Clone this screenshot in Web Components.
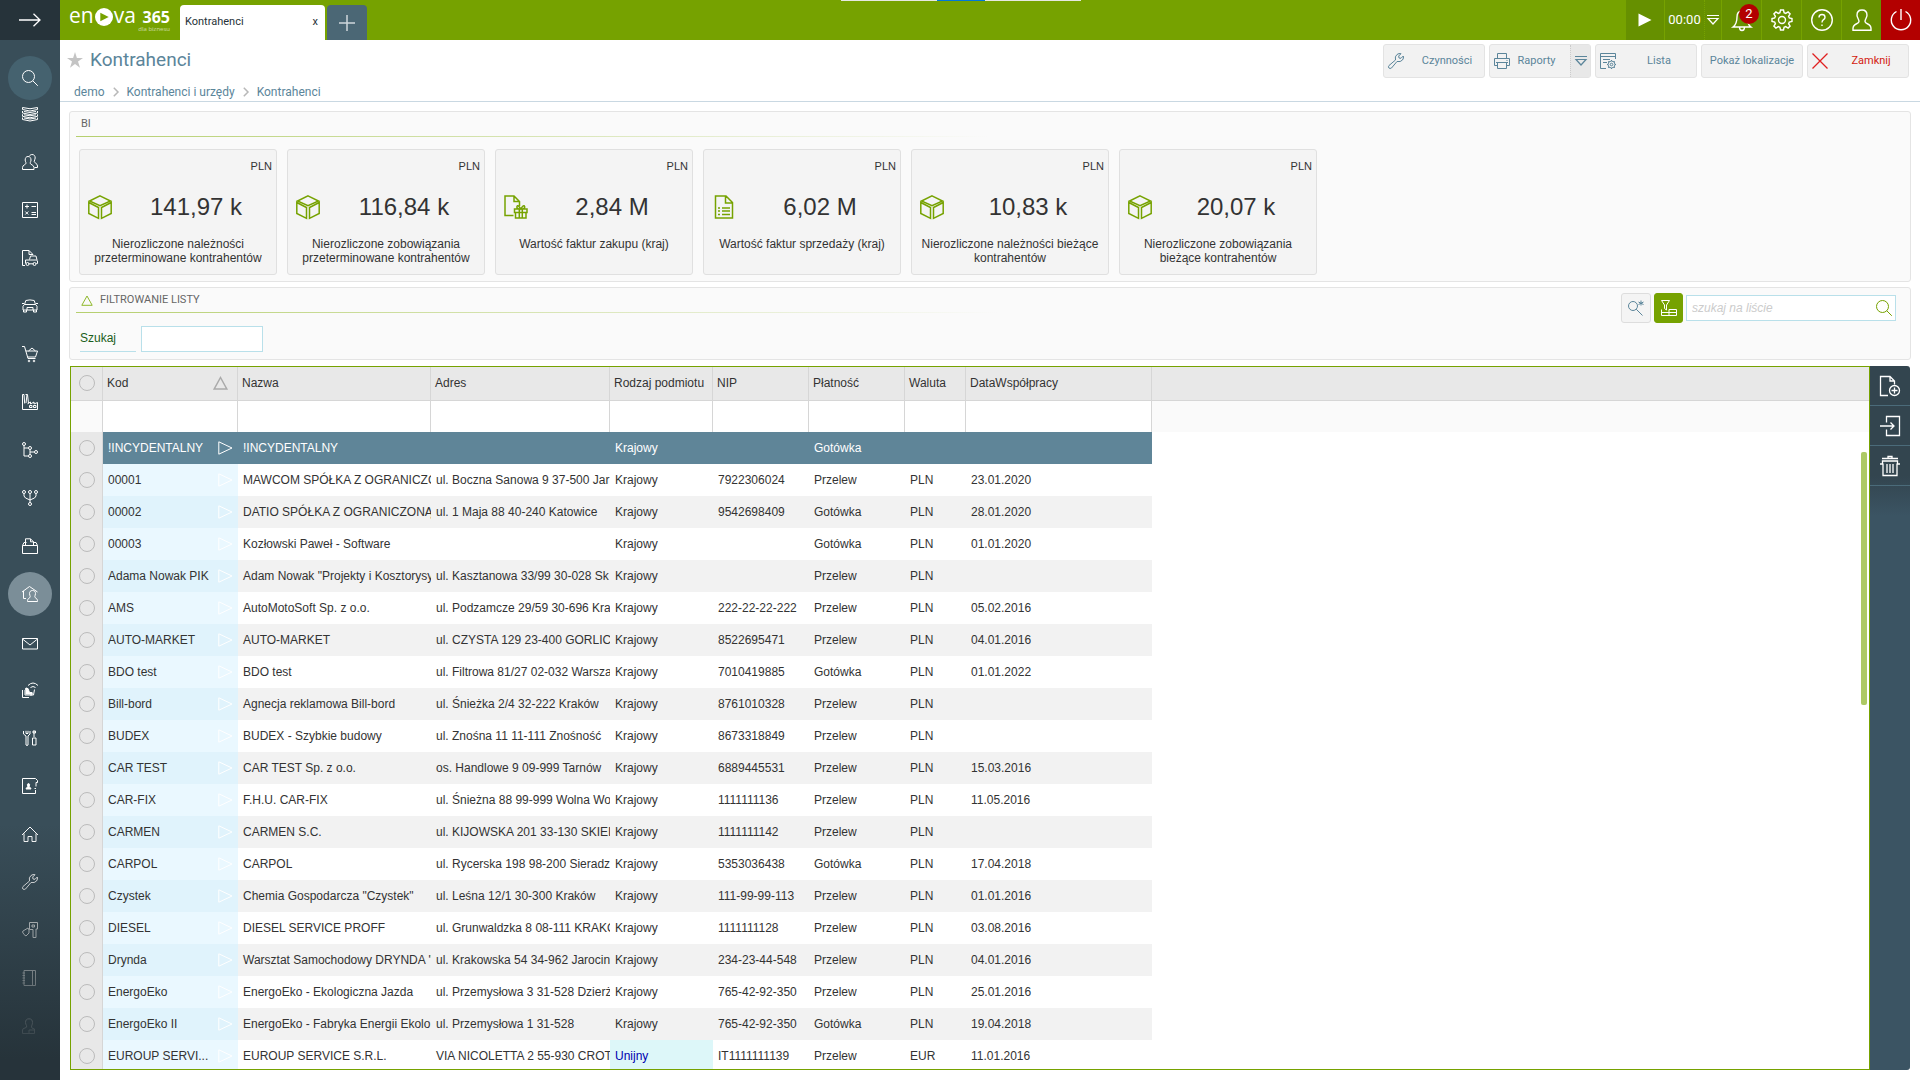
<!DOCTYPE html>
<html lang="pl">
<head>
<meta charset="utf-8">
<title>Kontrahenci</title>
<style>
  html, body { height: 100%; margin: 0; }
  body { background: #fff; color: #333; font: 12px/14px "Liberation Sans", Arial, sans-serif; overflow: hidden; }
</style>
</head>
<body>
<en-app>
  <en-sidebar slot="side"></en-sidebar>
  <en-topbar slot="top"></en-topbar>
  <en-page-header slot="head" heading="Kontrahenci"></en-page-header>
  <en-panel heading="BI">
    <en-kpi icon="cube" unit="PLN" value="141,97 k">Nierozliczone należności przeterminowane kontrahentów</en-kpi>
    <en-kpi icon="cube" unit="PLN" value="116,84 k">Nierozliczone zobowiązania przeterminowane kontrahentów</en-kpi>
    <en-kpi icon="gift" unit="PLN" value="2,84 M">Wartość faktur zakupu (kraj)</en-kpi>
    <en-kpi icon="invoice" unit="PLN" value="6,02 M">Wartość faktur sprzedaży (kraj)</en-kpi>
    <en-kpi icon="cube" unit="PLN" value="10,83 k">Nierozliczone należności bieżące kontrahentów</en-kpi>
    <en-kpi icon="cube" unit="PLN" value="20,07 k">Nierozliczone zobowiązania bieżące kontrahentów</en-kpi>
  </en-panel>
  <en-panel heading="FILTROWANIE LISTY" collapsible>
    <en-filter></en-filter>
    <en-list-tools slot="tools"></en-list-tools>
  </en-panel>
  <en-grid></en-grid>
</en-app>

<script>
const ICONS = {
  arrow: ['0 0 22 14', '<path d="M0 7h21M14.5.7 21 7l-6.5 6.3" stroke-width="1.3"/>'],
  search: ['0 0 16 16', '<circle cx="6.5" cy="6.5" r="6"/><path d="m10.8 10.8 5 5"/>'],
  layers: ['0 0 16 16', '<path d="M.5 1.500v2q7.500 3 15 0v-2q-7.500 2.500-15 0M.5 5v2q7.500 3 15 0V5M.5 8.300v2q7.500 3 15 0v-2M.5 11.500v2q7.500 3 15 0v-2M2 5.500q6 2 12 0M2 8.800q6 2 12 0M2 12q6 2 12 0"/>'],
  users: ['0 0 16 16', '<path d="M6 2.500c2.200 0 3 1.500 3 3.500 0 1.600-.8 2-.8 3.200 0 1.600 3.800 1.600 3.800 4.300v2H.5v-2c0-2.700 3.500-2.700 3.500-4.300C4 8 3.200 7.600 3.200 6c0-2 .8-3.500 2.800-3.500zM7.500 2C8 1 9 .5 10 .5c2.200 0 3.200 1.500 3.200 3.500 0 1.600-1 2.200-1 3.400 0 1.600 3.300 1.800 3.300 4.600v1.500h-3"/>'],
  calc: ['0 0 16 16', '<path d="M.5.5h15v15H.5zM3 4.500h4M5 2.500v4M9.500 4.500H14M9.500 10.500H14M9.500 12.500H14M3.300 9.500l3 3M6.300 9.500l-3 3"/>'],
  doccar: ['0 0 16 16', '<path d="M3 15.500H.5V.5h6.500l4 4M7 .5v4h4M7.500 9.500 8.500 6h5.500l1 4M3.500 13.500V10h11l1 1v2.500h-1.200M6.500 13.800h5"/><circle cx="5.500" cy="14" r="1.500"/><circle cx="12.500" cy="14" r="1.500"/>'],
  car: ['0 0 16 16', '<path d="M2.500 6.500 3.800 2.500q4-1.200 8.400 0l1.300 4M2.500 6.500h11l1.500 1.700v3.800H1V8.200zM1.500 12v2h3v-2M11.500 12v2h3v-2M0 5.500h2M14 5.500h2M5 12V9.500h6V12"/>'],
  cart: ['0 0 16 16', '<path d="M0 .5h2.500L6 12.500h7.500M3.800 5h11.700l-2 6H5.500M6.500 5 10 2l3.500 3"/><circle cx="7" cy="15" r=".8"/><circle cx="12" cy="15" r=".8"/>'],
  factory: ['0 0 16 16', '<path d="M.5 15.500V.5H2l.7 9M3.500.5h2l1 9M5 .8 4 9M.5 15.500h15v-7L12 10V8L8.500 10V8L5.500 9.800M7.500 11.500H10v2H7.500zM11.500 11.500H14v2h-2.500z"/>'],
  branch: ['0 0 16 16', '<circle cx="2" cy="2" r="1.500"/><circle cx="8" cy="6" r="1.500"/><circle cx="14" cy="10" r="1.500"/><circle cx="8" cy="14" r="1.500"/><path d="M2 3.500V14h4.500M2 6h4.500M8 7.500V10h4.500M8 10v2.500"/>'],
  merge: ['0 0 16 16', '<circle cx="2" cy="2" r="1.500"/><circle cx="8" cy="2" r="1.500"/><circle cx="14" cy="2" r="1.500"/><circle cx="8" cy="14" r="1.500"/><path d="M8 3.500v9M2 3.500V6q0 2 6 4 6-2 6-4V3.500"/>'],
  folder: ['0 0 16 16', '<path d="M.5 7.500h15v8H.5zM.5 7.500l1.500-3h2.500M3.500 7.500V.8h5l3 3v3.700M8.500.8v3h3M11.500 4.500H14l1.500 3"/>'],
  homeuser: ['0 0 16 16', '<path d="M1.500 5v7.500H4M0 6 7.500.5 15.500 6M10.500 4.500c2 0 3 1.300 3 3 0 1.500-.7 2-.7 3.200 0 1.600 2.700 1.500 2.700 3.800v1h-10v-1c0-2.300 2.700-2.200 2.700-3.800 0-1.200-.7-1.700-.7-3.200 0-1.700 1-3 3-3z"/>'],
  mail: ['0 0 16 16', '<path d="M.5 4.500h15v10.500H.5zM.5 5 8 11l7.500-6"/>'],
  remote: ['0 0 16 16', '<path d="M.5 8v7.500H7M3 8v5h7V10.500M12.500 7.500 11.500 13H8M6 3.500q5-5 10 0M8.500 5.500q2.500-2 5 0"/><path d="M4 6.500h2l1.500 4H10v1.500H4z" fill="currentColor"/><circle cx="4.500" cy="7" r="1" fill="currentColor"/>'],
  tools: ['0 0 16 16', '<path d="M1.500 1v3L4 6v9q1 1 2 0V6l2-2V1M4 .8v2.700h2V.8M12 1v6M11 1h2.500v2H11zM10.500 8h3.500v7h-3.500z"/>'],
  contact: ['0 0 16 16', '<path d="M15.500 4.500H14v4M13.500 12v3.500H.5V.5h13l2 2v2M14 10.500h-1.500"/><path d="M4 11q0-1.500 2-2-1.500-3.500.5-3.500T7 9q2 .5 2 2z" fill="currentColor"/>'],
  home: ['0 0 16 16', '<path d="M0 9 8 1l8 8M2 7.500v8h4v-5h4v5h4v-8"/>'],
  wrench: ['0 0 16 16', '<path d="M1 12.500 7.500 7Q6.500 3.500 9 1.500 11 0 13 .7L10.700 3l.3 2 2 .3L15.300 3q.7 2-.8 4-2 2.300-5.500 1.500L3.500 15q-1.500 1-2.600 0-1-1.200.1-2.500z"/>'],
  key: ['0 0 16 16', '<path d="M7.500.5h8V7h-1.500v8.500h-3V7.500h-3.500zM10 3h2.500v2H10zM1 9l5-3 1 2v3l-3 3-2-1.500L.5 10z"/>'],
  book: ['0 0 16 16', '<path d="M2 .5h11.500v15H2zM10.500.5v15M.5 3h2.500M.5 5.500h2.500M.5 8h2.500M.5 10.500h2.500M.5 13h2.500"/>'],
  badge: ['0 0 16 16', '<path d="M7 .8c2.500 0 3.500 1.500 3.500 3.700S9.500 7.500 9.500 9q0 1.500 3 2v4.500H.5V12q0-1.500 2.500-2t1.500-2.500Q3.500 6 3.500 4.500C3.500 2.300 4.500.8 7 .8zM7 15.500v-3.500h5.500"/>'],
  cap: ['0 0 16 16', '<path d="M.5 8 8 4.500 15.500 8 8 11.500z"/>'],
  bell: ['0 0 20 22', '<path d="M10 2q5 0 5 6 0 7 4 10H1q4-3 4-10 0-6 5-6zM7.500 18q0 3.500 2.500 3.500t2.500-3.500" stroke-width="1.400"/>'],
  gear: ['0 0 22 22', '<path d="M9.500 1h3l.6 2.700 1.600.7 2.400-1.500 2 2-1.500 2.400.7 1.600 2.700.6v3l-2.700.6-.7 1.600 1.500 2.400-2 2-2.400-1.500-1.600.7-.6 2.700h-3l-.6-2.700-1.600-.7-2.400 1.500-2-2 1.500-2.400-.7-1.600L1 12.500v-3l2.700-.6.7-1.600-1.500-2.400 2-2 2.400 1.500 1.600-.7z" stroke-width="1.400"/><circle cx="11" cy="11" r="3.500" stroke-width="1.400"/>'],
  help: ['0 0 22 22', '<g stroke-width="1.400"><circle cx="11" cy="11" r="10.300"/><path d="M8 8.500Q8 5.500 11 5.500t3 2.700q0 1.500-1.500 2.500T11 13.500M11 15.500v1.500"/></g>'],
  user: ['0 0 20 22', '<path d="M10 1c3.500 0 5 2.300 5 5.200 0 2.500-2 4-2 6.300 0 3 6 1.500 6 7v1.700H1v-1.700c0-5.500 6-4 6-7 0-2.300-2-3.800-2-6.300C5 3.300 6.500 1 10 1z" stroke-width="1.400"/>'],
  power: ['0 0 22 22', '<path d="M11 0v11M6.500 2.500a9.700 9.700 0 1 0 9 0" stroke-width="1.400"/>'],
  play: ['0 0 14 14', '<path d="M.5.5 13.500 7 .5 13.500z" fill="currentColor" stroke="none"/>'],
  drop: ['0 0 12 10', '<path d="M0 .5h12M1 3.500h10L6 9z" stroke-width="1.200"/>'],
  plus: ['0 0 16 16', '<path d="M8 0v16M0 8h16" stroke-width="1.500"/>'],
  star: ['0 0 16 16', '<path d="m8 0 1.900 6H16l-5 3.600 2 6.200-5-3.800-5 3.800 2-6.200L0 6h6.100z" fill="currentColor" stroke="none"/>'],
  chevron: ['0 0 6 10', '<path d="m.8.700 4.200 4.300-4.200 4.300" stroke-width="1.500"/>'],
  printer: ['0 0 16 16', '<path d="M3.500 5.500v-5h9v5M3.500 12.500h-3v-7h15v7h-3M3.500 9.500h9v6h-9zM2 9.500h12M12.500 7.500h1"/>'],
  listgear: ['0 0 16 16', '<path d="M6 15.500H.5V.5h15V6M.5 3.500h15M3 6.500h7M3 9.500h4"/><circle cx="11.500" cy="11.500" r="3.500"/><circle cx="11.500" cy="11.500" r="1.300"/><path d="M11.500 7v1M11.500 15v1M7 11.500h1M15 11.500h1M8.300 8.300l.8.800M14 14l.8.800M14.700 8.300l-.8.800M9 14l-.8.800"/>'],
  close: ['0 0 16 16', '<path d="m.5.5 15 15M15.500.5l-15 15" stroke-width="1.300"/>'],
  cube: ['0 0 24 24', '<path d="M12 .800 22.500 6 12 10.800 1.500 6zM.8 7.500l9.700 5v10.800L.8 18.500zM23.200 7.500l-9.700 5v10.800l9.700-4.800z" stroke-width="1.500"/>'],
  gift: ['0 0 24 24', '<path d="M9.500 20.500H1V1h9l5.500 5.500V11M10 1v5.500h5.500M10.500 14H23v3.500H10.500zM11.500 17.500h10.500V23H11.500zM15.300 14v9M18.300 14v9M16.800 14q-4.500 0-3.800-2.500.8-2.500 3.800 2.500 3-5 3.800-2.500.7 2.500-3.800 2.500" stroke-width="1.500"/>'],
  invoice: ['0 0 24 24', '<path d="M3.500 1H14l6.500 6.500V23h-17zM13.500 1v7h7M10 13h8M10 16h8M10 19.500h8M6 13h2M6 16h2M6 19.500h2" stroke-width="1.500"/>'],
  triangle: ['0 0 12 11', '<path d="M6 1 11.200 10.300H.8z"/>'],
  sort: ['0 0 15 14', '<path d="M7.500 1.500 13.800 13H1.200z" stroke-width="1.500"/>'],
  open: ['0 0 15 14', '<path d="M.8.8 14 7 .8 13.200z"/>'],
  searchstar: ['0 0 16 16', '<circle cx="5" cy="6" r="4.500"/><path d="m8.200 9.200 6.300 6.300M13 .5v5M10.500 2l5 2.500M15.500 2l-5 2.500"/>'],
  funnel: ['0 0 16 16', '<path d="M.5.5h8L5.500 5v5l-2-1.500V5zM.5 9.500v6h15v-6H8M.5 12.500h15M8 9.500v6"/>'],
  docplus: ['0 0 20 20', '<g stroke-width="1.300"><path d="M8 19.500H.5V.5H10L14.500 5v3.500M10 .5V5h4.500"/><circle cx="14.500" cy="14.500" r="5"/><path d="M14.500 11.500v6M11.500 14.500h6"/></g>'],
  enter: ['0 0 20 20', '<path d="M6.500 6.500v-6h13v19h-13v-6M0 10h14M10.500 6.500 14 10l-3.500 3.500" stroke-width="1.300"/>'],
  trash: ['0 0 20 20', '<path d="M8 2.500V.5h4v2M2 2.500h16M0 8h2.500V5h15v3H20M3 7.500v12h14v-12M7 8v9M10 8v9M13 8v9" stroke-width="1.300"/>']
};

/** Defines a custom element whose shadow root is filled by its own template. */
function define(tag, css, markup, setup) {
  const template = document.createElement('template');
  customElements.define(tag, class extends HTMLElement {
    connectedCallback() {
      if (this.shadowRoot) return;
      const root = this.attachShadow({ mode: 'open' });
      template.innerHTML = `<style>:host,*{box-sizing:border-box}button,input{font:inherit;color:inherit;margin:0}button{padding:0;border:0;background:none}a{color:inherit;text-decoration:none}${css}</style>` +
        (typeof markup === 'function' ? markup(this) : markup);
      root.append(template.content.cloneNode(true));
      if (setup) setup(this, root);
    }
  });
}

define('en-icon',
  `:host{display:block;flex:none;width:16px;height:16px}
   svg{display:block;width:100%;height:100%;fill:none;stroke:currentColor;stroke-width:1;overflow:visible}`,
  el => { const [box, body] = ICONS[el.getAttribute('name')]; return `<svg viewBox="${box}" aria-hidden="true">${body}</svg>`; });

define('en-app',
  `:host{display:grid;grid-template:auto auto minmax(0,1fr) / 60px minmax(0,1fr);height:100vh}
   slot[name=side]::slotted(*){grid-row:1 / 4;grid-column:1}
   main{display:flex;flex-direction:column;min-height:0;padding:9px 9px 10px}`,
  `<slot name="side"></slot><slot name="top"></slot><slot name="head"></slot><main><slot></slot></main>`);

define('en-sidebar',
  `:host{display:flex;flex-direction:column;min-height:0;color:#fff;background:#394e59}
   .toggle{flex:none;display:grid;place-items:center;height:40px;background:#26333a;color:#fff}
   .toggle en-icon{width:22px;height:14px}
   .find{flex:none;display:grid;place-items:center;width:44px;height:44px;margin:16px auto 6px;border-radius:50%;background:#45626f;color:#fff}
   nav{position:relative;flex:1;min-height:0;overflow:hidden}
   nav::after{content:"";position:absolute;inset:auto 0 0;height:256px;background:linear-gradient(#26333a00,#26333a 92%);pointer-events:none}
   ul{margin:-16px 0 0;padding:0;list-style:none}
   li{display:grid;place-items:center;height:48px}
   a{display:grid;place-items:center;width:44px;height:44px;border-radius:50%}
   .on{background:#7b8e98}`,
  () => {
    const items = [['layers', 'Dane'], ['users', 'Kadry'], ['calc', 'Księgowość'], ['doccar', 'Delegacje'], ['car', 'Pojazdy'], ['cart', 'Handel'], ['factory', 'Produkcja'],
      ['branch', 'Projekty'], ['merge', 'Procesy'], ['folder', 'Dokumenty'], ['homeuser', 'Kontrahenci i urzędy'], ['mail', 'Poczta'], ['remote', 'Praca zdalna'], ['tools', 'Serwis'],
      ['contact', 'Kontakty'], ['home', 'Środki trwałe'], ['wrench', 'Narzędzia'], ['key', 'Wynajem'], ['book', 'Notatnik'], ['badge', 'Pracownik'], ['cap', 'Szkolenia']];
    return `<button class="toggle" aria-label="Rozwiń menu"><en-icon name="arrow"></en-icon></button>
      <button class="find" aria-label="Szukaj w menu"><en-icon name="search"></en-icon></button>
      <nav><ul>${items.map(([i, t]) => `<li><a href="#${i}" aria-label="${t}"${i === 'homeuser' ? ' class="on" aria-current="page"' : ''}><en-icon name="${i}"></en-icon></a></li>`).join('')}</ul></nav>`;
  });

define('en-logo',
  `:host{display:flex;align-items:flex-start;width:120px;height:40px;padding:0 10px 0 9px;color:#fff;font-family:"Open Sans","Noto Sans",sans-serif}
   .w{font-size:21px;line-height:30px}
   .o{flex:none;display:grid;place-items:center;width:18px;height:18px;margin:8px 1px 0;border-radius:50%;background:#fff;color:#76a200}
   .o en-icon{width:9px;height:10px;margin-left:2px}
   .s{display:flex;flex-direction:column;align-items:flex-end;margin:8px 0 0 auto}
   b{font-size:16px;line-height:18px}
   small{font-size:6px;line-height:6px;opacity:.6}`,
  `<span class="w">en</span><span class="o"><en-icon name="play"></en-icon></span><span class="w">va</span><span class="s"><b>365</b><small>dla biznesu</small></span>`);

define('en-topbar',
  `:host{position:relative;display:flex;align-items:stretch;height:40px;background:#76a200;color:#fff;font-family:Roboto,sans-serif}
   .tab{display:flex;align-items:center;justify-content:space-between;width:145px;height:35px;margin-top:5px;padding:0 7px 2px 5px;border-radius:4px 4px 0 0;background:#fff;color:#263238;font-size:11px;line-height:14px}
   .new{display:grid;place-items:center;width:40px;height:35px;margin:5px 0 0 2px;border-radius:4px 4px 0 0;background:#4b6775;color:#cfd8dc}
   .strip{position:absolute;top:0;left:42%;width:240px;height:1px;background:linear-gradient(90deg,#e5e8e0 40%,#0078d7 40% 60%,#e5e8e0 60%)}
   .acts{display:flex;margin-left:auto;background:#669000}
   .acts button{position:relative;display:flex;align-items:center;justify-content:center;width:40px;border-left:1px solid #76a200;color:#fff}
   .acts en-icon{width:22px;height:22px}
   .acts .p,.acts .x{width:39px}
   .acts .p en-icon{width:14px;height:14px}
   .acts .t{font-size:13px;line-height:16px}
   .acts .d{width:17px;border-left:1px dotted #76a200}
   .acts .d en-icon{width:12px;height:10px}
   .acts .x{background:#b30000;border-color:#b30000}
   .n{position:absolute;right:2px;top:4px;width:20px;height:20px;border-radius:50%;background:#b30000;font-size:13px;line-height:20px;text-align:center}`,
  `<en-logo></en-logo>
   <div class="tab"><a href="#tab">Kontrahenci</a><button aria-label="Zamknij kartę">x</button></div>
   <button class="new" aria-label="Nowa karta"><en-icon name="plus"></en-icon></button>
   <span class="strip"></span>
   <div class="acts"><button class="p" aria-label="Start"><en-icon name="play"></en-icon></button><button class="t">00:00</button><button class="d" aria-label="Więcej"><en-icon name="drop"></en-icon></button>
   <button aria-label="Powiadomienia"><en-icon name="bell"></en-icon><span class="n">2</span></button><button aria-label="Ustawienia"><en-icon name="gear"></en-icon></button><button aria-label="Pomoc"><en-icon name="help"></en-icon></button><button aria-label="Użytkownik"><en-icon name="user"></en-icon></button><button class="x" aria-label="Wyloguj"><en-icon name="power"></en-icon></button></div>`);

define('en-action',
  `:host{display:flex;width:102px;height:34px;border:1px solid #e3e3e3;border-radius:3px;background:#f2f2f2;color:#5b859a;font-size:11px;line-height:14px}
   .m{flex:1;display:flex;align-items:center;padding:0 4px}
   .m span{flex:1;text-align:center}
   :host([icon]) .m span{padding-left:10px}
   :host([split]) .m{padding-right:0}
   :host([split]) .m span{padding:0 7px 0 0}
   .d{display:grid;place-items:center;width:20px;border-left:1px dotted #ccc;background:#e8e8e8}
   .d en-icon{width:12px;height:10px}
   :host([danger]) .m span{color:#d32010} :host([danger]) en-icon{color:#e02020}`,
  el => `<button class="m">${el.hasAttribute('icon') ? `<en-icon name="${el.getAttribute('icon')}"></en-icon>` : ''}<span><slot></slot></span></button>` +
    (el.hasAttribute('split') ? '<button class="d" aria-label="Więcej raportów"><en-icon name="drop"></en-icon></button>' : ''));

define('en-page-header',
  `:host{display:flex;justify-content:space-between;align-items:flex-start;height:62px;padding:4px 11px 0 7px;border-bottom:1px solid #c9d8e2;color:#5b859a;font-family:Roboto,sans-serif}
   .h{display:flex;align-items:center;gap:7px;height:32px}
   h1{margin:0;font-size:19px;line-height:24px;font-weight:400}
   .h button{color:#c4c4c4}
   ol{display:flex;align-items:center;gap:8px;margin:4px 0 0 7px;padding:0;list-style:none;font-size:12px;line-height:24px}
   li{display:flex;align-items:center;gap:8px}
   li en-icon{width:6px;height:10px;color:#b8b8b8}
   .b{display:flex;gap:4px}`,
  el => `<div><div class="h"><button aria-label="Ulubione"><en-icon name="star"></en-icon></button><h1>${el.getAttribute('heading')}</h1></div>
   <nav><ol><li><a href="#demo">demo</a></li><li><en-icon name="chevron"></en-icon><a href="#ku">Kontrahenci i urzędy</a></li><li><en-icon name="chevron"></en-icon><a href="#k">Kontrahenci</a></li></ol></nav></div>
   <div class="b"><en-action icon="wrench">Czynności</en-action><en-action icon="printer" split>Raporty</en-action><en-action icon="listgear">Lista</en-action><en-action>Pokaż lokalizacje</en-action><en-action icon="close" danger>Zamknij</en-action></div>`);

define('en-panel',
  `:host{display:flex;justify-content:space-between;align-items:flex-start;flex:none;margin-bottom:5px;border:1px solid #e4e4e4;border-radius:3px;background:#fafafa}
   :host([collapsible]){margin-bottom:6px}
   .l{flex:1;padding:0 6px}
   h2{display:flex;align-items:center;gap:7px;height:24px;margin:0;padding-left:5px;font:400 11px/14px Roboto,sans-serif;color:#666}
   h2 en-icon{width:12px;height:11px;color:#8fb82c}
   hr{width:50%;height:1px;margin:0;border:0;background:linear-gradient(90deg,#b5cf6e,#b5cf6e00)}
   :host([collapsible]) hr{width:60%}
   .c{display:flex;gap:10px;padding:12px 3px 6px}`,
  el => `<section class="l"><h2>${el.hasAttribute('collapsible') ? '<en-icon name="triangle"></en-icon>' : ''}${el.getAttribute('heading')}</h2><hr><div class="c"><slot></slot></div></section><slot name="tools"></slot>`);

define('en-kpi',
  `:host{display:flex;flex-direction:column;width:198px;height:126px;padding:9px 4px 0;border:1px solid #e0e0e0;border-radius:3px;background:#f4f4f4;color:#333}
   .u{font-size:11px;line-height:14px;text-align:right}
   .v{display:flex;align-items:center;height:34px;margin:17px 0 13px;padding-left:4px}
   .v en-icon{width:24px;height:24px;color:#76a200}
   .v span{flex:1;padding-left:8px;font-size:24px;line-height:28px;text-align:center}
   p{margin:0;text-align:center}`,
  el => `<div class="u">${el.getAttribute('unit')}</div><div class="v"><en-icon name="${el.getAttribute('icon')}"></en-icon><span>${el.getAttribute('value')}</span></div><p><slot></slot></p>`);

define('en-filter',
  `:host{display:flex;align-items:center;gap:5px;padding:1px 0 1px 1px}
   label{width:56px;border-bottom:1px solid #b9e0ea;color:#1b5e20;line-height:25px}
   input{width:122px;height:26px;padding:0 4px;border:1px solid #b9e0ea;background:#fff}`,
  `<label for="q">Szukaj</label><input id="q" type="text">`);

define('en-list-tools',
  `:host{display:flex;gap:3px;padding:5px 14px 0 0}
   button{display:grid;place-items:center;width:30px;height:30px;border:1px solid #ddd;border-radius:3px;background:#f4f4f4;color:#5b859a}
   .g{width:29px;background:#76a200;border-color:#76a200;color:#fff}
   label{display:flex;align-items:center;width:210px;height:26px;margin-top:2px;padding:0 3px 0 5px;border:1px solid #b9e0ea;background:#fff;color:#76a200}
   input{flex:1;min-width:0;padding:0;border:0;outline:0;background:none;font-size:12px;color:#333}
   input::placeholder{color:#ccc;font-style:italic;opacity:1}`,
  `<button aria-label="Szukaj zaawansowane"><en-icon name="searchstar"></en-icon></button><button class="g" aria-label="Filtr"><en-icon name="funnel"></en-icon></button>
   <label><input type="text" placeholder="szukaj na liście" aria-label="szukaj na liście"><en-icon name="search"></en-icon></label>`);

const COLUMNS = [['Kod', 135], ['Nazwa', 193], ['Adres', 179], ['Rodzaj podmiotu', 103], ['NIP', 96], ['Płatność', 96], ['Waluta', 61], ['DataWspółpracy', 186]];
const ROWS = `!INCYDENTALNY|!INCYDENTALNY||Krajowy||Gotówka||
00001|MAWCOM SPÓŁKA Z OGRANICZO|ul. Boczna Sanowa 9 37-500 Jar|Krajowy|7922306024|Przelew|PLN|23.01.2020
00002|DATIO SPÓŁKA Z OGRANICZONĄ|ul. 1 Maja 88 40-240 Katowice|Krajowy|9542698409|Gotówka|PLN|28.01.2020
00003|Kozłowski Paweł - Software||Krajowy||Gotówka|PLN|01.01.2020
Adama Nowak PIK|Adam Nowak "Projekty i Kosztorysy|ul. Kasztanowa 33/99 30-028 Sk|Krajowy||Przelew|PLN|
AMS|AutoMotoSoft Sp. z o.o.|ul. Podzamcze 29/59 30-696 Kra|Krajowy|222-22-22-222|Przelew|PLN|05.02.2016
AUTO-MARKET|AUTO-MARKET|ul. CZYSTA 129 23-400 GORLIC|Krajowy|8522695471|Przelew|PLN|04.01.2016
BDO test|BDO test|ul. Filtrowa 81/27 02-032 Warsza|Krajowy|7010419885|Gotówka|PLN|01.01.2022
Bill-bord|Agnecja reklamowa Bill-bord|ul. Śnieżka 2/4 32-222 Kraków|Krajowy|8761010328|Przelew|PLN|
BUDEX|BUDEX - Szybkie budowy|ul. Znośna 11 11-111 Znośność|Krajowy|8673318849|Przelew|PLN|
CAR TEST|CAR TEST Sp. z o.o.|os. Handlowe 9 09-999 Tarnów|Krajowy|6889445531|Przelew|PLN|15.03.2016
CAR-FIX|F.H.U. CAR-FIX|ul. Śnieżna 88 99-999 Wolna Wo|Krajowy|1111111136|Przelew|PLN|11.05.2016
CARMEN|CARMEN S.C.|ul. KIJOWSKA 201 33-130 SKIEI|Krajowy|1111111142|Przelew|PLN|
CARPOL|CARPOL|ul. Rycerska 198 98-200 Sieradz|Krajowy|5353036438|Gotówka|PLN|17.04.2018
Czystek|Chemia Gospodarcza "Czystek"|ul. Leśna 12/1 30-300 Kraków|Krajowy|111-99-99-113|Przelew|PLN|01.01.2016
DIESEL|DIESEL SERVICE PROFF|ul. Grunwaldzka 8 08-111 KRAKÓ|Krajowy|1111111128|Przelew|PLN|03.08.2016
Drynda|Warsztat Samochodowy DRYNDA "|ul. Krakowska 54 34-962 Jarocin|Krajowy|234-23-44-548|Przelew|PLN|04.01.2016
EnergoEko|EnergoEko - Ekologiczna Jazda|ul. Przemysłowa 3 31-528 Dzierż|Krajowy|765-42-92-350|Przelew|PLN|25.01.2016
EnergoEko II|EnergoEko - Fabryka Energii Ekolo|ul. Przemysłowa 1 31-528|Krajowy|765-42-92-350|Gotówka|PLN|19.04.2018
EUROUP SERVI...|EUROUP SERVICE S.R.L.|VIA NICOLETTA 2 55-930 CROT|Unijny|IT1111111139|Przelew|EUR|11.01.2016`.split('\n').map(r => r.split('|'));

define('en-grid',
  `:host{flex:1;display:flex;min-height:0;margin:0 1px}
   .w{position:relative;flex:1;min-width:0;overflow:hidden;border:1px solid #76a200;background:#fff}
   table{width:100%;table-layout:fixed;border-collapse:separate;border-spacing:0}
   th,td{padding:0 0 0 5px;overflow:hidden;white-space:nowrap;text-align:left;font-weight:400}
   thead th{height:34px;padding:0 0 2px 4px;border-right:1px solid #d6d6d6;border-bottom:1px solid #d6d6d6;background:#e8e8e8}
   thead td{height:31px;padding:0;border-right:1px solid #d6d6d6}
   thead tr>:last-child{border-right:0} thead td:first-child,thead td:last-child{background:#fafafa}
   thead input[type=text]{display:block;width:100%;height:31px;padding:0 4px;border:0;outline:0;background:none}
   tbody td,tbody th{height:32px}
   tbody tr:nth-child(odd) td:not(:last-child){background:#f2f2f2}
   tbody tr td:first-child{border-right:1px solid #d6d6d6}
   tbody tr td:first-child,tbody tr:nth-child(odd) td:first-child{background:#e8e8e8}
   tbody tr th{background:#eaf8ff} tbody tr:nth-child(odd) th{background:#e0f3fc}
   tbody tr.sel th,tbody tr.sel td:not(:first-child):not(:last-child){background:#5f8598;color:#fff}
   tbody tr td.eu{background:#ddf7f9!important;color:#0000b0}
   td:first-child{padding:0}
   thead th:first-child{padding-left:0}
   input[type=checkbox]{display:block;appearance:none;width:16px;height:16px;margin:0 auto;border:1px solid #bbb;border-radius:50%}
   .k{display:flex;align-items:center;padding-right:5px}
   .k span{flex:1;min-width:0;margin-right:4px;overflow:hidden;text-overflow:ellipsis}
   .k en-icon{width:15px;height:14px;color:#fff}
   thead .k{padding-right:9px} thead .k en-icon{color:#aaa}
   .bar{position:absolute;top:85px;right:2px;width:6px;height:253px;border-radius:2px;background:#adc965}
   .rail{flex:none;display:flex;flex-direction:column;width:40px;border-radius:0 3px 3px 0;background:linear-gradient(#33454f 110px,#3b5463 150px)}
   .rail button{display:grid;place-items:center;height:40px;border-bottom:1px solid #4b6b7a;color:#fff}
   .rail en-icon{width:20px;height:20px}`,
  () => `<div class="w"><table><colgroup><col style="width:32px">${COLUMNS.map(c => `<col style="width:${c[1]}px">`).join('')}<col></colgroup>
    <thead><tr><th scope="col"><input type="checkbox" aria-label="Zaznacz wszystkie"></th>${COLUMNS.map(([t], i) => `<th scope="col">${i ? t : `<div class="k"><span>${t}</span><en-icon name="sort"></en-icon></div>`}</th>`).join('')}<th></th></tr>
    <tr><td></td>${COLUMNS.map(([t]) => `<td><input type="text" aria-label="Filtr: ${t}"></td>`).join('')}<td></td></tr></thead>
    <tbody>${ROWS.map((r, n) => `<tr${n ? '' : ' class="sel"'}><td><input type="checkbox" aria-label="Zaznacz"></td>${r.map((c, i) => i ? `<td${c === 'Unijny' ? ' class="eu"' : ''}>${c}</td>` : `<th scope="row"><div class="k"><span>${c}</span><en-icon name="open"></en-icon></div></th>`).join('')}<td></td></tr>`).join('')}</tbody></table><div class="bar"></div></div>
    <div class="rail"><button aria-label="Nowy"><en-icon name="docplus"></en-icon></button><button aria-label="Otwórz"><en-icon name="enter"></en-icon></button><button aria-label="Usuń"><en-icon name="trash"></en-icon></button></div>`);
</script>
</body>
</html>
